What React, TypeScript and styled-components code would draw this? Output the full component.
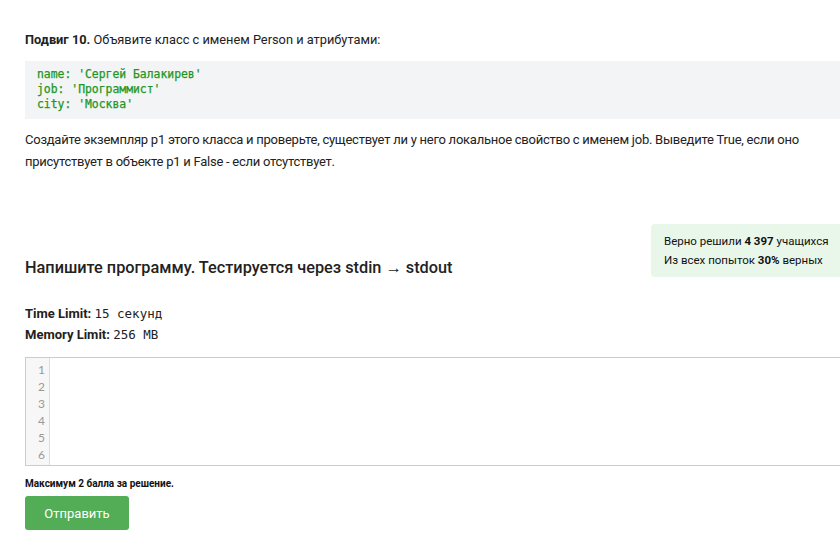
import styled, { createGlobalStyle } from "styled-components";

const Global = createGlobalStyle`
  html, body {
    margin: 0;
    padding: 0;
    background: #ffffff;
    overflow: hidden;
  }
  body {
    font-family: Roboto, "Liberation Sans", sans-serif;
    color: #222222;
  }
`;

const Page = styled.div`
  width: 900px;
  padding: 31px 0 0 25px;
`;

const Lead = styled.p`
  margin: 0 0 13px;
  font-size: 12.8px;
  line-height: 17px;
  b {
    font-weight: 700;
  }
`;

const Code = styled.pre`
  margin: 0;
  background: #f3f4f5;
  padding: 6px 12px 7px 12px;
  font-family: "DejaVu Sans Mono", monospace;
  font-size: 11.4px;
  line-height: 15px;
  color: #22961e;
  -webkit-text-stroke: 0.25px #22961e;
`;

const Para = styled.p`
  margin: 10px 0 0;
  width: 800px;
  font-size: 13px;
  line-height: 22px;
  letter-spacing: -0.25px;
`;

const TaskRow = styled.div`
  display: flex;
  align-items: flex-start;
  justify-content: space-between;
  margin-top: 51px;
`;

const TaskTitle = styled.h2`
  margin: 33px 0 0;
  font-size: 16.3px;
  font-weight: 500;
  line-height: 22px;
  color: #222222;
`;

const Stats = styled.div`
  width: 240px;
  margin-right: 11px;
  background: #e8f7e9;
  border-radius: 4px;
  padding: 8px 10px 7px 13px;
  font-size: 11.5px;
  line-height: 19px;
  color: #111111;
  b {
    font-weight: 700;
  }
`;

const Limits = styled.div`
  margin-top: 24px;
  font-size: 13px;
  line-height: 21px;
  b {
    font-weight: 700;
  }
`;

const Mono = styled.span`
  font-family: "DejaVu Sans Mono", monospace;
  font-size: 12.5px;
`;

const Editor = styled.div`
  display: flex;
  margin-top: 12px;
  height: 107px;
  border: 1px solid #cccccc;
  border-right: none;
`;

const Gutter = styled.div`
  width: 23px;
  background: #f7f7f7;
  border-right: 1px solid #dddddd;
  padding-top: 3px;
  text-align: right;
  font-family: Lato, "Open Sans", sans-serif;
  font-size: 12px;
  line-height: 17px;
  color: #999999;
  div {
    padding-right: 4px;
  }
`;

const Area = styled.div`
  flex: 1;
  background: #ffffff;
`;

const Note = styled.div`
  margin-top: 12px;
  font-size: 10px;
  font-weight: 700;
  line-height: 12px;
  color: #111111;
`;

const Submit = styled.button`
  margin-top: 6px;
  width: 104px;
  height: 34px;
  background: #52ad56;
  border: none;
  border-radius: 3px;
  color: #ffffff;
  font-family: Roboto, "Liberation Sans", sans-serif;
  font-size: 13px;
  cursor: pointer;
`;

export default function App() {
  return (
    <>
      <Global />
      <Page>
        <Lead>
          <b>Подвиг 10.</b> Объявите класс с именем Person и атрибутами:
        </Lead>
        <Code>
          {"name: 'Сергей Балакирев'\njob: 'Программист'\ncity: 'Москва'"}
        </Code>
        <Para>
          Создайте экземпляр p1 этого класса и проверьте, существует ли у него
          локальное свойство с именем job. Выведите True, если оно присутствует
          в объекте p1 и False - если отсутствует.
        </Para>
        <TaskRow>
          <TaskTitle>Напишите программу. Тестируется через stdin → stdout</TaskTitle>
          <Stats>
            Верно решили <b>4 397</b> учащихся
            <br />
            Из всех попыток <b>30%</b> верных
          </Stats>
        </TaskRow>
        <Limits>
          <b>Time Limit:</b> <Mono>15 секунд</Mono>
          <br />
          <b>Memory Limit:</b> <Mono>256 MB</Mono>
        </Limits>
        <Editor>
          <Gutter>
            {[1, 2, 3, 4, 5, 6].map((n) => (
              <div key={n}>{n}</div>
            ))}
          </Gutter>
          <Area />
        </Editor>
        <Note>Максимум 2 балла за решение.</Note>
        <Submit>Отправить</Submit>
      </Page>
    </>
  );
}
